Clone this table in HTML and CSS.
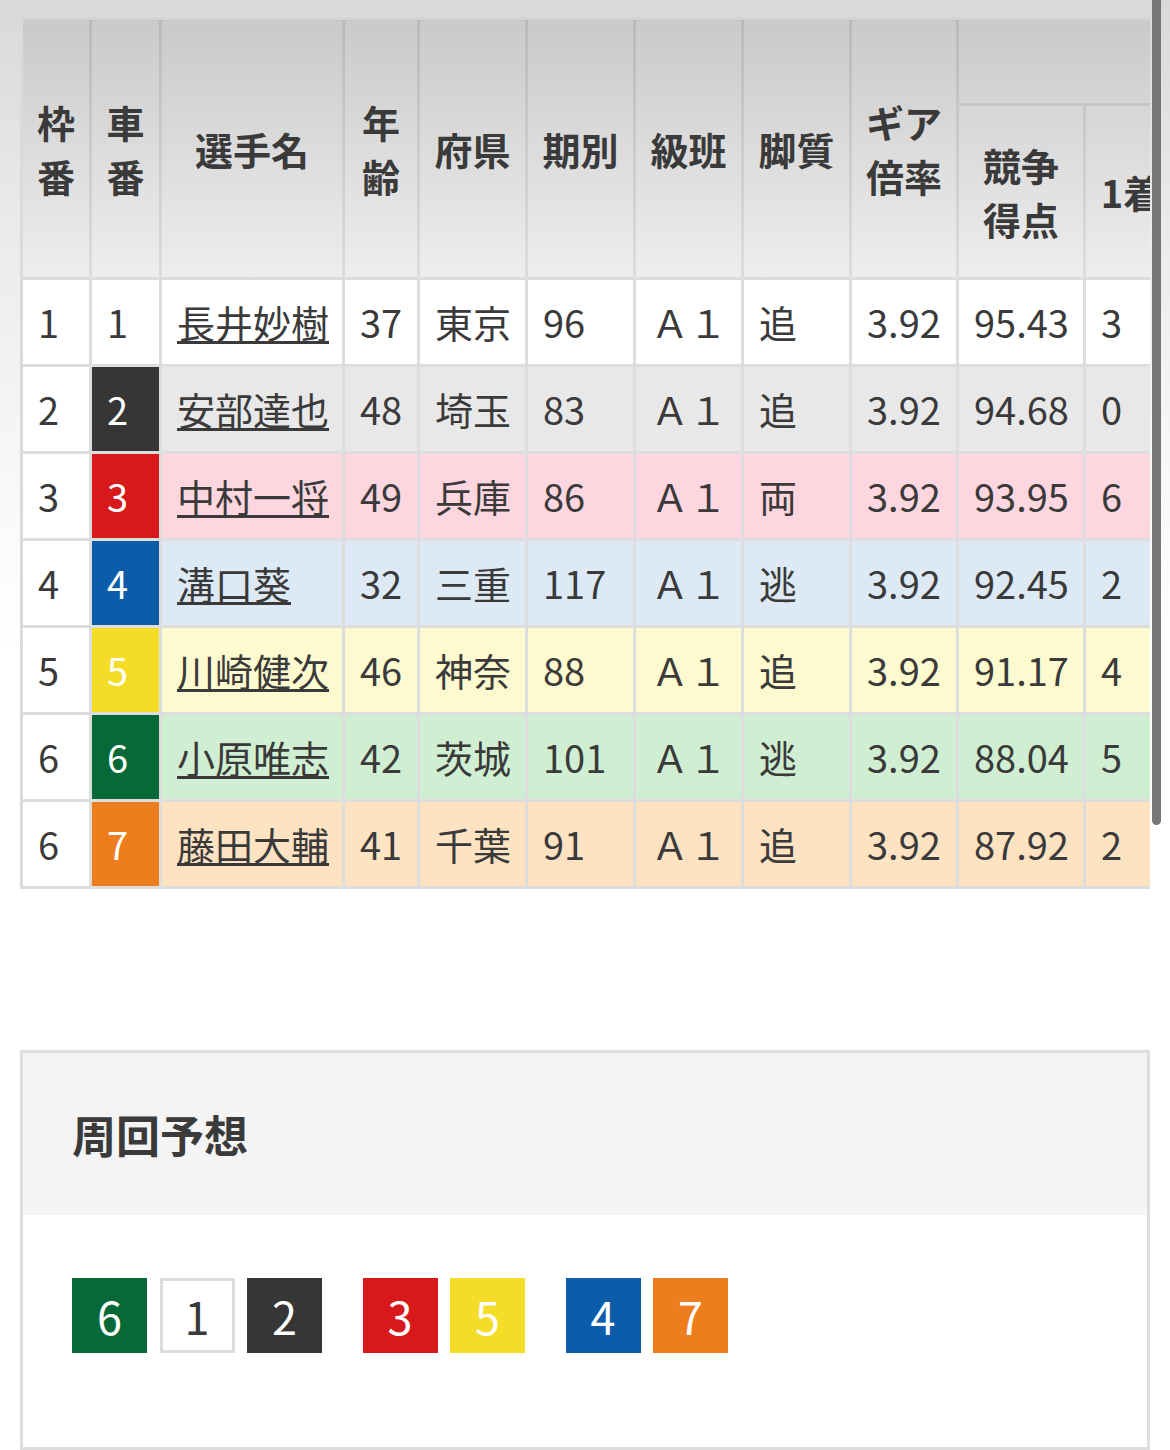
FILE: index.html
```html
<!DOCTYPE html>
<html lang="ja">
<head>
<meta charset="utf-8">
<title>出走表</title>
<link rel="stylesheet" href="styles.css">
</head>
<body>
<div class="entry-wrap">
  <table class="entry">
    <colgroup>
      <col class="w-waku"><col class="w-car"><col class="w-name"><col class="w-age">
      <col class="w-pref"><col class="w-term"><col class="w-class"><col class="w-leg">
      <col class="w-gear"><col class="w-score"><col class="w-res">
    </colgroup>
    <thead>
      <tr class="ha">
        <th rowspan="2">枠番</th>
        <th rowspan="2">車番</th>
        <th rowspan="2">選手名</th>
        <th rowspan="2">年齢</th>
        <th rowspan="2">府県</th>
        <th rowspan="2">期別</th>
        <th rowspan="2">級班</th>
        <th rowspan="2">脚質</th>
        <th rowspan="2">ギア倍率</th>
        <th colspan="2" class="group"></th>
      </tr>
      <tr class="hb">
        <th>競争得点</th>
        <th>1着</th>
      </tr>
    </thead>
    <tbody>
      <tr class="r1">
        <td class="waku">1</td><td class="car car1">1</td><td><a href="#">長井妙樹</a></td>
        <td>37</td><td>東京</td><td>96</td><td>Ａ１</td><td>追</td><td>3.92</td><td>95.43</td><td>3</td>
      </tr>
      <tr class="r2">
        <td class="waku">2</td><td class="car car2">2</td><td><a href="#">安部達也</a></td>
        <td>48</td><td>埼玉</td><td>83</td><td>Ａ１</td><td>追</td><td>3.92</td><td>94.68</td><td>0</td>
      </tr>
      <tr class="r3">
        <td class="waku">3</td><td class="car car3">3</td><td><a href="#">中村一将</a></td>
        <td>49</td><td>兵庫</td><td>86</td><td>Ａ１</td><td>両</td><td>3.92</td><td>93.95</td><td>6</td>
      </tr>
      <tr class="r4">
        <td class="waku">4</td><td class="car car4">4</td><td><a href="#">溝口葵</a></td>
        <td>32</td><td>三重</td><td>117</td><td>Ａ１</td><td>逃</td><td>3.92</td><td>92.45</td><td>2</td>
      </tr>
      <tr class="r5">
        <td class="waku">5</td><td class="car car5">5</td><td><a href="#">川崎健次</a></td>
        <td>46</td><td>神奈</td><td>88</td><td>Ａ１</td><td>追</td><td>3.92</td><td>91.17</td><td>4</td>
      </tr>
      <tr class="r6">
        <td class="waku">6</td><td class="car car6">6</td><td><a href="#">小原唯志</a></td>
        <td>42</td><td>茨城</td><td>101</td><td>Ａ１</td><td>逃</td><td>3.92</td><td>88.04</td><td>5</td>
      </tr>
      <tr class="r7">
        <td class="waku">6</td><td class="car car7">7</td><td><a href="#">藤田大輔</a></td>
        <td>41</td><td>千葉</td><td>91</td><td>Ａ１</td><td>追</td><td>3.92</td><td>87.92</td><td>2</td>
      </tr>
    </tbody>
  </table>
</div>

<section class="lap">
  <div class="lap-head"><h2>周回予想</h2></div>
  <div class="lap-body">
    <div class="grp">
      <span class="chip car6">6</span><span class="chip car1">1</span><span class="chip car2">2</span>
    </div>
    <div class="grp">
      <span class="chip car3">3</span><span class="chip car5">5</span>
    </div>
    <div class="grp">
      <span class="chip car4">4</span><span class="chip car7">7</span>
    </div>
  </div>
</section>

<div class="scroll-thumb"></div>
</body>
</html>
```

FILE: styles.css
```css
html, body {
  margin: 0;
  height: 1450px;
  overflow: hidden;
}
body {
  position: relative;
  font-family: "Noto Sans CJK JP", "Noto Sans", sans-serif;
  color: #3a3a3a;
  background: linear-gradient(to bottom, #d9d9d9 0px, #ececec 250px, #f8f8f8 480px, #ffffff 650px) no-repeat;
  background-color: #fff;
}

/* ---------- entry table ---------- */
.entry-wrap {
  margin: 17px 20px 0;
  overflow: hidden;
}
.entry {
  border-collapse: separate;
  border-spacing: 0;
  table-layout: fixed;
  width: 1159px;
  border-top: 3px solid #d4d4d4;
  border-left: 3px solid #dadada;
  font-size: 38px;
  line-height: 54px;
}
.w-waku { width: 69px; }
.w-car { width: 70px; }
.w-name { width: 183px; }
.w-age { width: 75px; }
.w-pref, .w-term, .w-class, .w-leg { width: 108px; }
.w-gear { width: 107px; }
.w-score { width: 127px; }
.w-res { width: 93px; }

.entry th {
  padding: 0 12px;
  font-weight: 700;
  text-align: center;
  vertical-align: middle;
  white-space: normal;
  border-right: 3px solid rgba(0, 0, 0, 0.07);
  border-bottom: 3px solid rgba(0, 0, 0, 0.07);
  background: linear-gradient(to bottom, #c9c9c9 17px, #eeeeee 280px) fixed;
}
.entry .ha { height: 86px; }
.entry .hb { height: 174px; }
.entry th.group {
  padding: 0;
}

.entry td {
  padding: 15px;
  text-align: left;
  white-space: nowrap;
  border-right: 3px solid #dddddd;
  border-bottom: 3px solid #dddddd;
  background: #ffffff;
}
.entry td a {
  color: inherit;
  text-decoration: underline;
  text-decoration-thickness: 3px;
  text-underline-offset: 3px;
}

.r2 td { background: #e8e8e8; }
.r3 td { background: #fdd6df; }
.r4 td { background: #ddeaf6; }
.r5 td { background: #fefacf; }
.r6 td { background: #d0eed1; }
.r7 td { background: #fee3c3; }
.entry td.waku { background: #ffffff; }

.car1 { background: #ffffff; color: #3a3a3a; }
.car2 { background: #363636; color: #ffffff; }
.car3 { background: #d7191b; color: #ffffff; }
.car4 { background: #0c5caa; color: #ffffff; }
.car5 { background: #f5dc27; color: #ffffff; }
.car6 { background: #086938; color: #ffffff; }
.car7 { background: #ee7d1e; color: #ffffff; }
.entry td.car1 { background: #ffffff; color: #3a3a3a; }
.entry td.car2 { background: #363636; color: #ffffff; }
.entry td.car3 { background: #d7191b; color: #ffffff; }
.entry td.car4 { background: #0c5caa; color: #ffffff; }
.entry td.car5 { background: #f5dc27; color: #ffffff; }
.entry td.car6 { background: #086938; color: #ffffff; }
.entry td.car7 { background: #ee7d1e; color: #ffffff; }

/* ---------- lap prediction ---------- */
.lap {
  margin: 161px 20px 0;
  border: 3px solid #dddddd;
  background: #ffffff;
}
.lap-head {
  background: #f4f4f4;
  padding: 50px 49px;
}
.lap-head h2 {
  margin: 0;
  font-size: 44px;
  line-height: 62px;
  font-weight: 700;
  color: #3a3a3a;
}
.lap-body {
  box-sizing: border-box;
  height: 232px;
  padding: 63px 49px 0;
  display: flex;
  align-items: flex-start;
  gap: 40.5px;
}
.grp {
  display: flex;
  gap: 12.5px;
}
.chip {
  box-sizing: border-box;
  width: 75px;
  height: 75px;
  display: flex;
  align-items: center;
  justify-content: center;
  font-size: 45px;
  line-height: 1;
}
.chip.car1 {
  border: 3px solid #dddddd;
}

/* overlay scrollbar thumb */
.scroll-thumb {
  position: absolute;
  left: 1152px;
  top: -8px;
  width: 9px;
  height: 833px;
  border-radius: 5px;
  background: #767676;
}
```
